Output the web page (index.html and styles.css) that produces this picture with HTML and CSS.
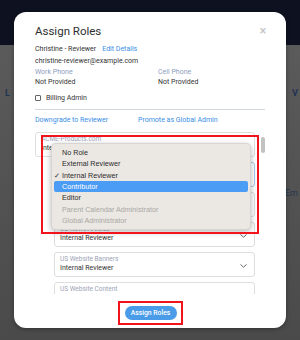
FILE: index.html
```html
<!DOCTYPE html>
<html>
<head>
<meta charset="utf-8">
<link rel="stylesheet" href="styles.css">
</head>
<body>
<div class="page">
  <div class="topbar"></div>
  <div class="behind">
    <div class="behind-row"><span>L</span><span>V</span></div>
    <div class="behind-em">n Em</div>
  </div>

  <div class="modal">
    <div class="modal-head">
      <h1 class="title">Assign Roles</h1>
      <span class="close">×</span>
    </div>
    <div class="user"><span>Christine - Reviewer</span><a class="link">Edit Details</a></div>
    <div class="email">christine-reviewer@example.com</div>
    <div class="phones">
      <div><div class="lbl">Work Phone</div><div class="val">Not Provided</div></div>
      <div><div class="lbl">Cell Phone</div><div class="val">Not Provided</div></div>
    </div>
    <div class="billing"><span class="cb"></span><span>Billing Admin</span></div>
    <div class="rule"></div>
    <div class="actions"><a class="link">Downgrade to Reviewer</a><a class="link">Promote as Global Admin</a></div>

    <div class="roles">
      <div class="scroll">
        <div class="list">
          <div class="sel sel-top">
            <div class="sel-text"><div class="sel-lbl">ACME-Products.com</div><div class="sel-val">Internal Reviewer</div></div>
            <svg class="chev" width="7" height="4" viewBox="0 0 7 4"><path d="M0.5 0.5 L3.5 3.2 L6.5 0.5" fill="none" stroke="#6b6b6b" stroke-width="1"/></svg>
          </div>
          <div class="sel sel-sub sel-focus">
            <div class="sel-text"><div class="sel-lbl">US Events Calendar</div><div class="sel-val">Contributor</div></div>
            <svg class="chev" width="7" height="4" viewBox="0 0 7 4"><path d="M0.5 0.5 L3.5 3.2 L6.5 0.5" fill="none" stroke="#6b6b6b" stroke-width="1"/></svg>
          </div>
          <div class="sel sel-sub">
            <div class="sel-text"><div class="sel-lbl">US Media Library</div><div class="sel-val">Internal Reviewer</div></div>
            <svg class="chev" width="7" height="4" viewBox="0 0 7 4"><path d="M0.5 0.5 L3.5 3.2 L6.5 0.5" fill="none" stroke="#6b6b6b" stroke-width="1"/></svg>
          </div>
          <div class="sel sel-sub">
            <div class="sel-text"><div class="sel-lbl">US News Articles</div><div class="sel-val">Internal Reviewer</div></div>
            <svg class="chev" width="7" height="4" viewBox="0 0 7 4"><path d="M0.5 0.5 L3.5 3.2 L6.5 0.5" fill="none" stroke="#6b6b6b" stroke-width="1"/></svg>
          </div>
          <div class="sel sel-sub">
            <div class="sel-text"><div class="sel-lbl">US Website Banners</div><div class="sel-val">Internal Reviewer</div></div>
            <svg class="chev" width="7" height="4" viewBox="0 0 7 4"><path d="M0.5 0.5 L3.5 3.2 L6.5 0.5" fill="none" stroke="#6b6b6b" stroke-width="1"/></svg>
          </div>
          <div class="sel sel-sub">
            <div class="sel-text"><div class="sel-lbl">US Website Content</div><div class="sel-val">Internal Reviewer</div></div>
            <svg class="chev" width="7" height="4" viewBox="0 0 7 4"><path d="M0.5 0.5 L3.5 3.2 L6.5 0.5" fill="none" stroke="#6b6b6b" stroke-width="1"/></svg>
          </div>
        </div>
        <div class="track"><div class="thumb"></div></div>
      </div>

      <ul class="menu">
        <li class="item"><span class="check"></span>No Role</li>
        <li class="item"><span class="check"></span>External Reviewer</li>
        <li class="item"><span class="check">✓</span>Internal Reviewer</li>
        <li class="item item-hl"><span class="check"></span>Contributor</li>
        <li class="item"><span class="check"></span>Editor</li>
        <li class="item item-off"><span class="check"></span>Parent Calendar Administrator</li>
        <li class="item item-off"><span class="check"></span>Global Administrator</li>
      </ul>
      <div class="annot annot-menu"></div>
    </div>

    <div class="footer">
      <span class="btn-wrap">
        <button class="btn">Assign Roles</button>
        <span class="annot annot-btn"></span>
      </span>
    </div>
  </div>
</div>
</body>
</html>
```

FILE: styles.css
```css
* { box-sizing: border-box; }
html, body { margin: 0; padding: 0; }
body {
  width: 300px;
  height: 340px;
  overflow: hidden;
  font-family: Roboto, "Liberation Sans", sans-serif;
}
.page {
  position: relative;
  width: 300px;
  height: 340px;
  background: linear-gradient(#5d5d5d, #4a4a4a);
}
.topbar {
  height: 45px;
  background: #0e1220;
}
.behind {
  display: flex;
  flex-direction: column;
  padding: 43px 2px 0 5px;
  color: #1f3352;
  font-weight: 700;
  font-size: 9px;
  line-height: 10px;
}
.behind-row {
  display: flex;
  justify-content: space-between;
}
.behind-em {
  align-self: flex-end;
  margin-top: 90px;
  font-weight: 400;
  color: #26344c;
}

/* modal */
.modal {
  position: absolute;
  left: 14px;
  top: 12px;
  width: 272px;
  height: 316px;
  background: #fff;
  border-radius: 12px;
  box-shadow: 0 1px 4px rgba(0,0,0,.35);
  padding: 12px 21px 0 21px;
  display: flex;
  flex-direction: column;
  color: #333;
  font-size: 7px;
}
.modal-head {
  display: flex;
  justify-content: space-between;
  align-items: center;
  margin-right: -1px;
}
.title {
  margin: 0;
  font-size: 11.5px;
  line-height: 14px;
  font-weight: 400;
  color: #2f2f2f;
}
.close {
  font-size: 12px;
  line-height: 14px;
  color: #c8c8c8;
  font-weight: 700;
}
.link { color: #3a8ee6; }
.user {
  margin-top: 5px;
  line-height: 12px;
  display: flex;
  gap: 6px;
}
.email { line-height: 12px; }
.phones {
  display: grid;
  grid-template-columns: 123px 1fr;
  margin-top: 1px;
}
.lbl { color: #8d9cc0; line-height: 9px; }
.val { line-height: 10px; }
.billing {
  margin-top: 5px;
  display: flex;
  align-items: center;
  gap: 5px;
  line-height: 12px;
}
.cb {
  width: 6px;
  height: 6px;
  border: 1px solid #666;
  border-radius: 1px;
}
.rule {
  margin-top: 5px;
  height: 1px;
  background: #d4d8e2;
}
.actions {
  margin-top: 4px;
  line-height: 12px;
  display: grid;
  grid-template-columns: 103px 1fr;
}

/* roles list */
.roles {
  position: relative;
  margin-top: 6px;
  height: 162px;
}
.scroll {
  height: 162px;
  overflow: hidden;
  display: flex;
  gap: 6px;
}
.list {
  width: 220px;
  display: flex;
  flex-direction: column;
  gap: 5px;
  flex-shrink: 0;
}
.sel {
  height: 25px;
  flex-shrink: 0;
  border: 1px solid #dedede;
  border-radius: 3px;
  padding: 2px 7px 0 5px;
  display: flex;
  align-items: center;
  justify-content: space-between;
}
.sel-sub { margin-left: 19px; padding-left: 5px; }
.sel-focus { border-color: #a9c9ee; }
.sel-text { align-self: flex-start; }
.sel-lbl { color: #9ba3b6; font-size: 6.5px; line-height: 9px; }
.sel-val { color: #333; font-size: 7px; line-height: 9px; }
.chev { margin-top: 1px; }
.track {
  width: 4px;
  padding-top: 5px;
}
.thumb {
  height: 16px;
  background: #c2c2c2;
  border-radius: 2px;
}

/* native-like popup menu */
.menu {
  position: absolute;
  left: 16px;
  top: 11px;
  width: 200px;
  margin: 0;
  padding: 3px 2px;
  list-style: none;
  background: #ebe7e3;
  border: 1px solid rgba(0,0,0,.08);
  border-radius: 5px;
  box-shadow: 0 2px 6px rgba(0,0,0,.28);
  font-family: "Liberation Sans", Arial, sans-serif;
  font-size: 7.2px;
  color: #2b2b2b;
}
.item {
  height: 11.33px;
  line-height: 11.33px;
  display: flex;
  border-radius: 2px;
}
.check {
  width: 8px;
  padding-left: 0;
  flex-shrink: 0;
}
.item-hl {
  background: #4b9cf5;
  color: #fff;
}
.item-off { color: #a9a7a5; }

.annot {
  position: absolute;
  border: 2px solid #f2141c;
  pointer-events: none;
}
.annot-menu {
  left: 6px;
  top: 3px;
  width: 218px;
  height: 99px;
}

/* footer */
.footer {
  margin-top: 12px;
  display: flex;
  justify-content: center;
}
.btn-wrap {
  position: relative;
  display: inline-flex;
  margin-left: 1px;
}
.btn {
  width: 52px;
  height: 14px;
  border: none;
  border-radius: 7px;
  background: #4a9be8;
  color: #fff;
  font-family: Roboto, "Liberation Sans", sans-serif;
  font-size: 6.8px;
  font-weight: 500;
  padding: 0;
}
.annot-btn {
  left: -7px;
  right: -6px;
  top: -5px;
  bottom: -5px;
}
```
